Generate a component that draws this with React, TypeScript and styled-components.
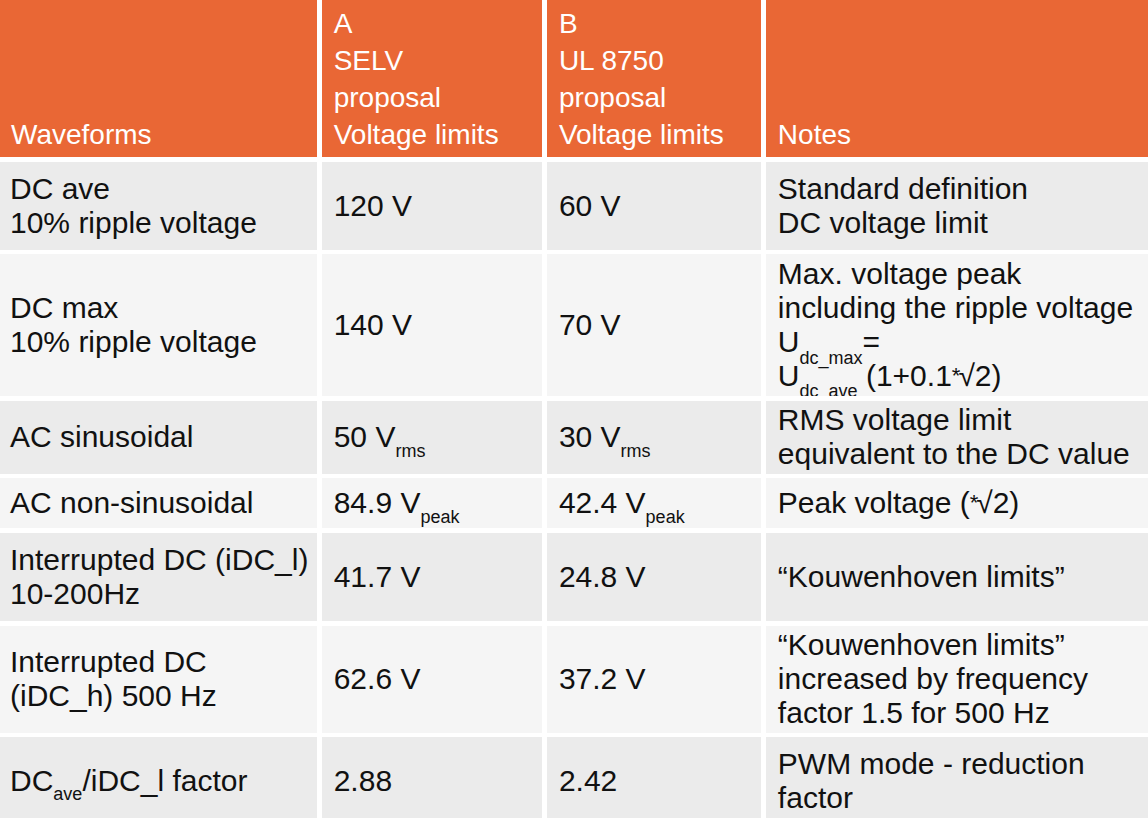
import React from "react";
import styled, { createGlobalStyle } from "styled-components";

const GlobalStyle = createGlobalStyle`
    html, body {
        margin: 0;
        padding: 0;
        background: #ffffff;
        overflow: hidden;
    }
    body {
        font-family: "Liberation Sans", Arial, sans-serif;
    }
`;

const Table = styled.div`
    display: grid;
    width: 1148px;
    grid-template-columns: 317px 220.5px 214.3px 1fr;
    grid-template-rows: 157px 88px 142px 72.5px 50px 88px 107px 88px;
    column-gap: 4.7px;
    row-gap: 4.7px;
    background: #ffffff;
`;

const HeadCell = styled.div`
    display: flex;
    flex-direction: column;
    justify-content: flex-end;
    background-color: #e96735;
    color: #ffffff;
    padding: 0 6px 4px 12px;
    font-size: 28px;
    line-height: 37px;
    white-space: nowrap;
    overflow: hidden;

    &:first-child {
        padding-left: 11px;
    }
`;

const Cell = styled.div<{ $tone: "dark" | "light"; $first?: boolean }>`
    display: flex;
    flex-direction: column;
    justify-content: center;
    background-color: ${(p) => (p.$tone === "dark" ? "#ebebeb" : "#f5f5f5")};
    color: #111111;
    padding: 0 4px 0 ${(p) => (p.$first ? 10 : 12)}px;
    font-size: 30px;
    line-height: 34px;
    white-space: nowrap;
    overflow: hidden;
`;

const Sub = styled.span<{ $drop?: number }>`
    font-size: 18px;
    line-height: 0;
    vertical-align: ${(p) => -(p.$drop ?? 10)}px;
`;

const Star = styled.span`
    font-size: 22px;
    letter-spacing: -2px;
    vertical-align: 3px;
`;

type Row = {
    tone: "dark" | "light";
    cells: React.ReactNode[];
};

const rows: Row[] = [
    {
        tone: "dark",
        cells: [
            <>DC ave<br />10% ripple voltage</>,
            <>120 V</>,
            <>60 V</>,
            <>Standard definition<br />DC voltage limit</>,
        ],
    },
    {
        tone: "light",
        cells: [
            <>DC max<br />10% ripple voltage</>,
            <>140 V</>,
            <>70 V</>,
            <>
                Max. voltage peak<br />
                including the ripple voltage<br />
                U<Sub $drop={12}>dc_max</Sub>=<br />
                U<Sub $drop={11}>dc_ave</Sub> (1+0.1<Star>*</Star>√2)
            </>,
        ],
    },
    {
        tone: "dark",
        cells: [
            <>AC sinusoidal</>,
            <>50 V<Sub>rms</Sub></>,
            <>30 V<Sub>rms</Sub></>,
            <>RMS voltage limit<br />equivalent to the DC value</>,
        ],
    },
    {
        tone: "light",
        cells: [
            <>AC non-sinusoidal</>,
            <>84.9 V<Sub>peak</Sub></>,
            <>42.4 V<Sub>peak</Sub></>,
            <>Peak voltage (<Star>*</Star>√2)</>,
        ],
    },
    {
        tone: "dark",
        cells: [
            <>Interrupted DC (iDC_l)<br />10-200Hz</>,
            <>41.7 V</>,
            <>24.8 V</>,
            <>“Kouwenhoven limits”</>,
        ],
    },
    {
        tone: "light",
        cells: [
            <>Interrupted DC<br />(iDC_h) 500 Hz</>,
            <>62.6 V</>,
            <>37.2 V</>,
            <>
                “Kouwenhoven limits”<br />
                increased by frequency<br />
                factor 1.5 for 500 Hz
            </>,
        ],
    },
    {
        tone: "dark",
        cells: [
            <>DC<Sub $drop={9}>ave</Sub>/iDC_l factor</>,
            <>2.88</>,
            <>2.42</>,
            <>PWM mode - reduction<br />factor</>,
        ],
    },
];

const headers: React.ReactNode[] = [
    <>Waveforms</>,
    <>A<br />SELV<br />proposal<br />Voltage limits</>,
    <>B<br />UL 8750<br />proposal<br />Voltage limits</>,
    <>Notes</>,
];

const App = () => {
    return (
        <>
            <GlobalStyle />
            <Table>
                {headers.map((h, i) => (
                    <HeadCell key={"h" + i}>
                        <div>{h}</div>
                    </HeadCell>
                ))}
                {rows.map((row, r) =>
                    row.cells.map((c, i) => (
                        <Cell key={r + "-" + i} $tone={row.tone} $first={i === 0}>
                            <div>{c}</div>
                        </Cell>
                    ))
                )}
            </Table>
        </>
    );
};

export default App;
